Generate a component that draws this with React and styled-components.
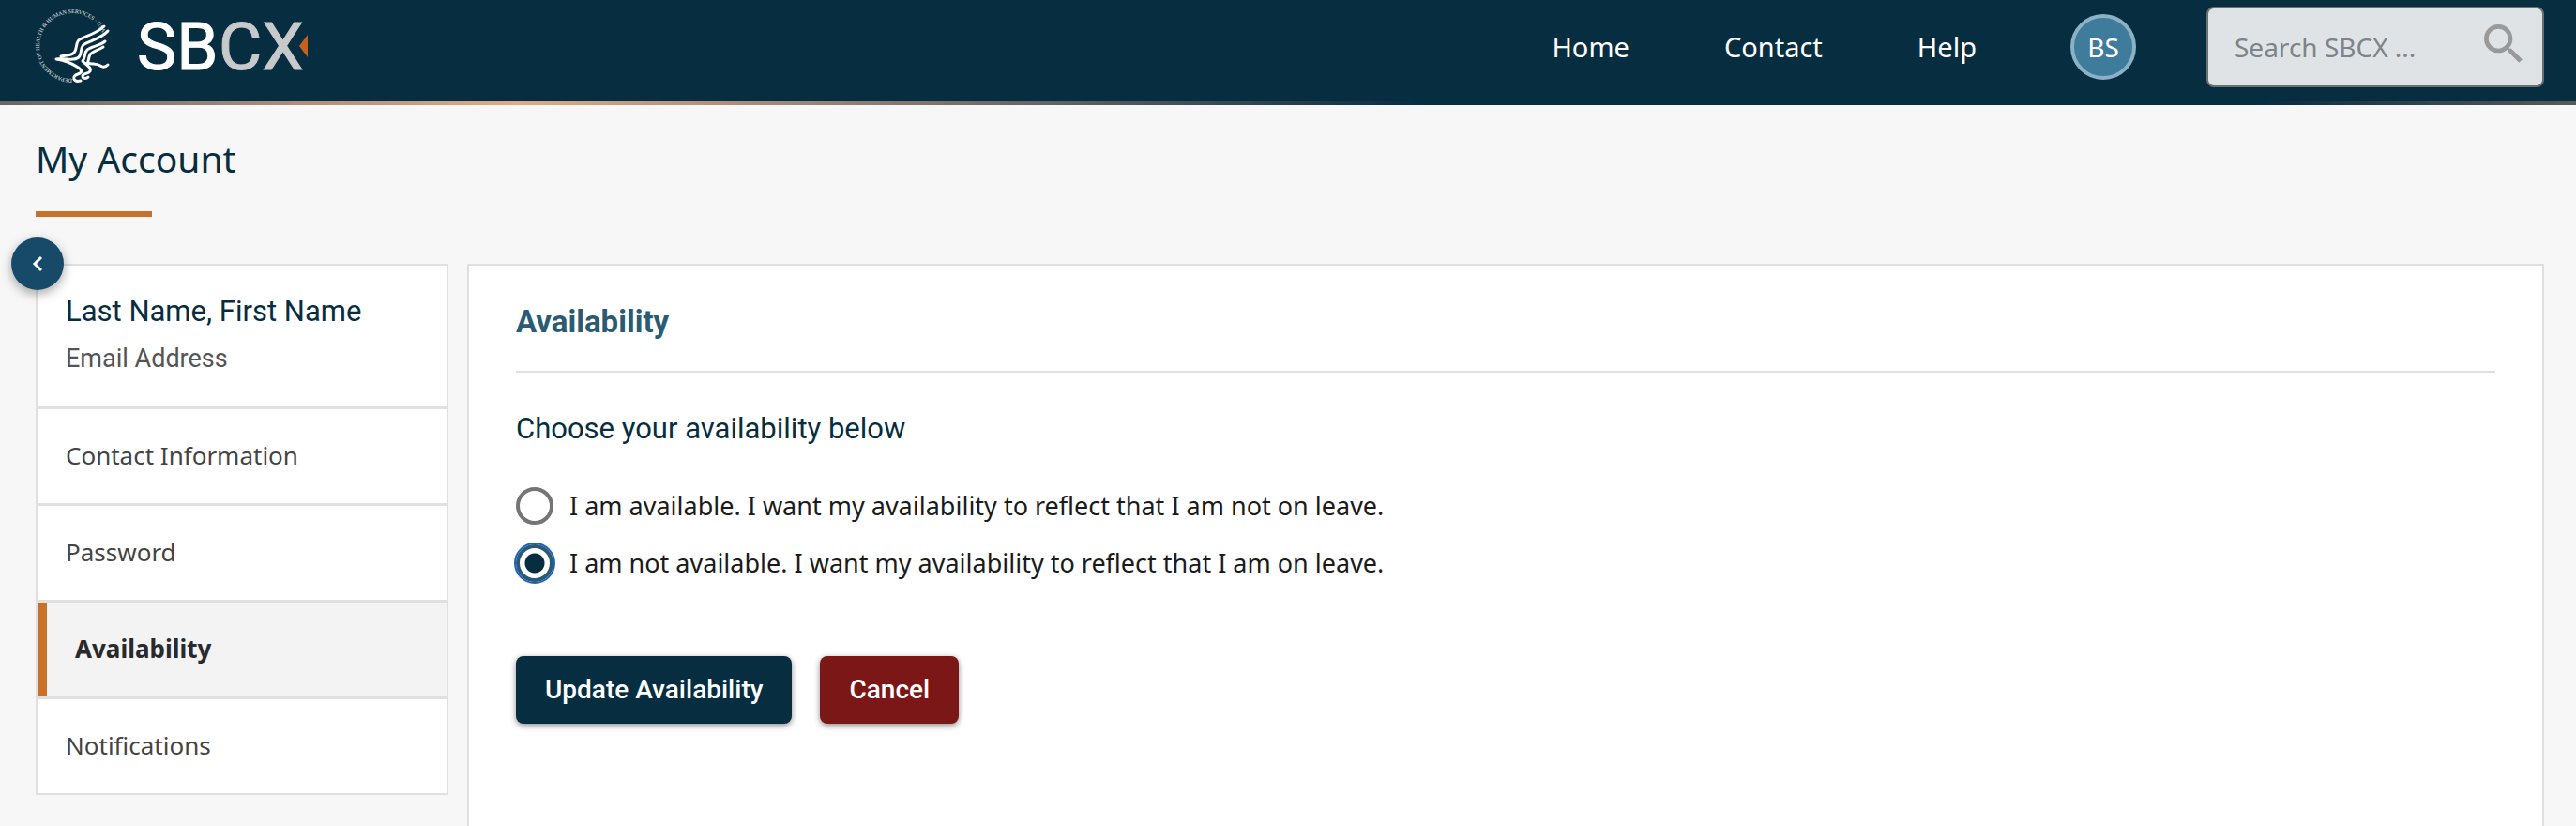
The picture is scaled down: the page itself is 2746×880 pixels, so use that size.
import React, { useState } from "react";
import styled, { createGlobalStyle } from "styled-components";

const navy = "#072e40";
const orange = "#c97128";
const line = "#e0e0e0";
const sans = '"Noto Sans", "Open Sans", sans-serif';
const roboto = 'Roboto, "Open Sans", sans-serif';

const GlobalStyle = createGlobalStyle`
  * { box-sizing: border-box; }
  body { margin: 0; background: #f7f7f7; color: #1b1b1b; font-family: ${sans}; }
  #root { min-height: 100vh; display: flex; }
  button, input { font: inherit; }
`;

const Page = styled.div`
  flex: 1;
  display: flex;
  flex-direction: column;
`;

const Header = styled.header`
  display: flex;
  flex-direction: column;
  background: ${navy};
`;

const HeaderBar = styled.div`
  display: flex;
  align-items: flex-start;
  justify-content: space-between;
  height: 108px;
  padding: 0 34px 0 38px;
`;

const HeaderStripe = styled.div`
  height: 4px;
  background: linear-gradient(90deg, #666 0%, #e3aa86 20%, #666 40%, ${navy} 55%, ${navy} 88%, #5a5a5a 100%);
`;

const Brand = styled.a`
  display: flex;
  align-items: flex-start;
  gap: 20px;
`;

const HeaderRight = styled.div`
  display: flex;
  align-items: center;
  height: 100px;
`;

const Nav = styled.nav`
  display: flex;
  align-items: center;
  gap: 101px;
  margin-right: 100px;
`;

const NavLink = styled.a`
  color: #fff;
  font-size: 29px;
  line-height: 40px;
  text-decoration: none;
`;

const Avatar = styled.button`
  width: 70px;
  height: 70px;
  margin-right: 75px;
  padding: 0;
  border: 4px solid #8bb1c5;
  border-radius: 50%;
  background: #3f7c9b;
  color: #fff;
  font-size: 28px;
`;

const SearchBox = styled.form`
  display: flex;
  align-items: center;
  width: 360px;
  height: 86px;
  padding: 0 20px 0 28px;
  border: 2px solid #6c6f71;
  border-radius: 8px;
  background: #dfe3e6;
`;

const SearchInput = styled.input`
  flex: 1;
  min-width: 0;
  padding: 0;
  border: 0;
  outline: 0;
  background: transparent;
  font-size: 28px;
  &::placeholder { color: #7e8487; opacity: 1; }
`;

const SearchButton = styled.button`
  display: flex;
  padding: 0 0 6px;
  border: 0;
  background: none;
`;

const Main = styled.main`
  flex: 1;
  display: flex;
  flex-direction: column;
  padding: 34px 34px 0 38px;
`;

const PageTitle = styled.h1`
  margin: 0;
  color: ${navy};
  font-size: 39px;
  font-weight: 400;
  line-height: 46px;
`;

const TitleRule = styled.div`
  width: 124px;
  height: 6px;
  margin: 33px 0 50px;
  background: ${orange};
`;

const Columns = styled.div`
  flex: 1;
  display: flex;
  gap: 20px;
`;

const Sidebar = styled.aside`
  position: relative;
  align-self: flex-start;
  flex: 0 0 440px;
  border: 2px solid ${line};
  background: #fff;
`;

const Collapse = styled.button`
  position: absolute;
  top: -30px;
  left: -28px;
  display: flex;
  align-items: center;
  justify-content: center;
  width: 56px;
  height: 56px;
  padding: 0;
  border: 0;
  border-radius: 50%;
  background: #174a68;
  box-shadow: 0 4px 12px rgba(0, 0, 0, 0.35);
`;

const Profile = styled.div`
  height: 150px;
  padding: 27px 30px 0;
  font-family: ${roboto};
`;

const ProfileName = styled.div`
  color: ${navy};
  font-size: 31px;
  line-height: 44px;
`;

const ProfileMail = styled.div`
  margin-top: 8px;
  color: #555;
  font-size: 27px;
  line-height: 40px;
`;

const MenuLink = styled.a`
  display: flex;
  align-items: center;
  height: 103px;
  padding: 0 30px 2px;
  border-top: 3px solid ${line};
  color: ${(p) => (p.$active ? "#2a2a2a" : "#444")};
  font-size: 26px;
  font-weight: ${(p) => (p.$active ? 700 : 400)};
  line-height: 36px;
  text-decoration: none;
  background: ${(p) => (p.$active ? "#f3f3f3" : "#fff")};
  box-shadow: ${(p) => (p.$active ? `inset 10px 0 ${orange}` : "none")};
  text-indent: ${(p) => (p.$active ? "10px" : "0")};
`;

const Panel = styled.section`
  flex: 1;
  min-width: 0;
  padding: 38px 50px 0;
  border: 2px solid ${line};
  border-bottom: 0;
  background: #fff;
`;

const PanelTitle = styled.h2`
  margin: 0;
  padding-bottom: 30px;
  border-bottom: 2px solid ${line};
  color: #2b5b73;
  font-family: ${roboto};
  font-size: 33px;
  font-weight: 700;
  line-height: 44px;
`;

const Choices = styled.fieldset`
  margin: 0;
  padding: 0;
  border: 0;
`;

const Question = styled.legend`
  padding: 38px 0 29px;
  color: ${navy};
  font-family: ${roboto};
  font-size: 31px;
  line-height: 44px;
`;

const Choice = styled.label`
  display: flex;
  align-items: center;
  gap: 17px;
  height: 61px;
  color: #1b1b1b;
  font-size: 27px;
  line-height: 40px;
`;

const Radio = styled.input`
  appearance: none;
  width: 40px;
  height: 40px;
  margin: 0;
  border: 4px solid #757575;
  border-radius: 50%;
  background: #fff;
  &:checked {
    border-color: #2b5b73;
    background: radial-gradient(circle, ${navy} 10px, #fff 11px);
    outline: 2px solid #1c62c4;
  }
`;

const Actions = styled.div`
  display: flex;
  gap: 30px;
  margin-top: 69px;
`;

const Action = styled.button`
  height: 72px;
  padding: 0 31px 2px;
  border: 0;
  border-radius: 8px;
  background: ${(p) => (p.$danger ? "#7b1717" : navy)};
  box-shadow: 0 2px 6px rgba(0, 0, 0, 0.45);
  color: #fff;
  font-family: ${roboto};
  font-size: 28px;
  font-weight: 500;
`;

const SealText = styled.text`
  fill: #e6ecef;
  font-family: "Liberation Serif", serif;
  font-size: 6px;
`;

function Seal() {
  return (
    <svg width="88" height="100" viewBox="0 0 88 100" overflow="visible" aria-hidden="true">
      <path id="ring" d="M39 84 A35 35 0 1 1 74 49" fill="none" />
      <SealText>
        <textPath href="#ring">DEPARTMENT OF HEALTH &amp; HUMAN SERVICES · USA</textPath>
      </SealText>
      <g fill="none" stroke="#fff" strokeWidth="3" strokeLinecap="round" strokeLinejoin="round">
        <path d="M73 28 C66 35 55 38 47 42 C42 45 45 51 41 56 C38 60 32 58 27 60" />
        <path d="M77 33 C71 40 60 43 52 47 C47 50 50 56 46 61 C40 66 31 61 22 63 C30 64 36 66 44 71 C49 74 51 77 45 79 C38 81 40 88 48 86" />
        <path d="M74 44 C68 49 60 49 55 53 C51 57 54 60 50 65 C54 70 60 71 58 76 C56 79 50 78 50 81 C50 84 54 84 56 82" />
        <path d="M72 50 C66 54 61 54 58 58 C56 62 57 65 55 67 C61 69 64 67 69 70 C72 72 75 71 77 69" />
      </g>
    </svg>
  );
}

function Wordmark() {
  return (
    <svg width="190" height="100" viewBox="0 0 190 100" overflow="visible" role="img" aria-label="SBCX">
      <g fontFamily="Roboto, sans-serif" fontSize="71" strokeWidth="1">
        <text x="0" y="74" fill="#fff" stroke="#fff">SB</text>
        <text x="87" y="74" fill="#c8c9cb" stroke="#c8c9cb">CX</text>
      </g>
      <path d="M182 37 L173 49 L182 61 Z" fill="#c8601d" />
    </svg>
  );
}

const menu = ["Contact Information", "Password", "Availability", "Notifications"];
const options = [
  "I am available. I want my availability to reflect that I am not on leave.",
  "I am not available. I want my availability to reflect that I am on leave.",
];

export default function App() {
  const [choice, setChoice] = useState(1);
  return (
    <Page>
      <GlobalStyle />
      <Header>
        <HeaderBar>
          <Brand href="#home" aria-label="SBCX home">
            <Seal />
            <Wordmark />
          </Brand>
          <HeaderRight>
            <Nav>
              <NavLink href="#home">Home</NavLink>
              <NavLink href="#contact">Contact</NavLink>
              <NavLink href="#help">Help</NavLink>
            </Nav>
            <Avatar type="button">BS</Avatar>
            <SearchBox onSubmit={(e) => e.preventDefault()}>
              <SearchInput aria-label="Search SBCX" placeholder="Search SBCX ..." />
              <SearchButton aria-label="Search">
                <svg width="42" height="42" viewBox="3 3 18 18" fill="#999">
                  <path d="M15.5 14h-.79l-.28-.27A6.47 6.47 0 0 0 16 9.5 6.5 6.5 0 1 0 9.5 16c1.61 0 3.09-.59 4.23-1.57l.27.28v.79l5 4.99L20.49 19l-4.99-5zm-6 0a4.5 4.5 0 1 1 0-9 4.5 4.5 0 0 1 0 9z" />
                </svg>
              </SearchButton>
            </SearchBox>
          </HeaderRight>
        </HeaderBar>
        <HeaderStripe />
      </Header>
      <Main>
        <PageTitle>My Account</PageTitle>
        <TitleRule />
        <Columns>
          <Sidebar>
            <Profile>
              <ProfileName>Last Name, First Name</ProfileName>
              <ProfileMail>Email Address</ProfileMail>
            </Profile>
            <nav aria-label="Account">
              {menu.map((item) => (
                <MenuLink key={item} href="#account" $active={item === "Availability"}>
                  {item}
                </MenuLink>
              ))}
            </nav>
            <Collapse type="button" aria-label="Collapse menu">
              <svg width="12" height="18" viewBox="0 0 12 18" fill="none" stroke="#fff" strokeWidth="3">
                <path d="M10 2 L3 9 L10 16" />
              </svg>
            </Collapse>
          </Sidebar>
          <Panel>
            <PanelTitle>Availability</PanelTitle>
            <Choices>
              <Question>Choose your availability below</Question>
              {options.map((text, i) => (
                <Choice key={text}>
                  <Radio type="radio" name="availability" checked={choice === i} onChange={() => setChoice(i)} />
                  {text}
                </Choice>
              ))}
            </Choices>
            <Actions>
              <Action type="button">Update Availability</Action>
              <Action type="button" $danger>Cancel</Action>
            </Actions>
          </Panel>
        </Columns>
      </Main>
    </Page>
  );
}
